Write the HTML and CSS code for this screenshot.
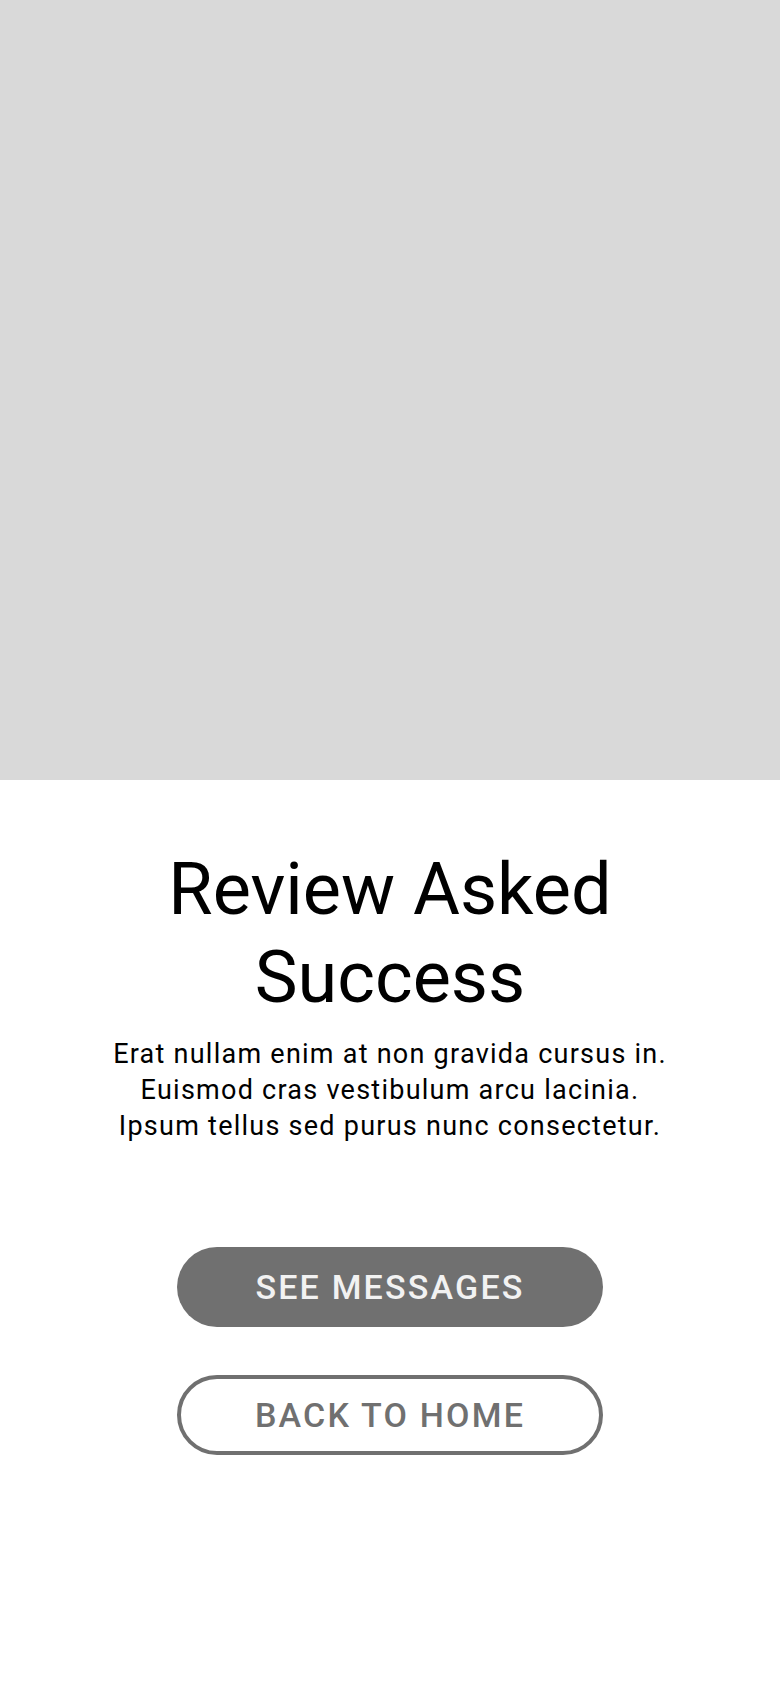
FILE: index.html
```html
<!DOCTYPE html>
<html lang="en">
<head>
<meta charset="utf-8">
<title>Review Asked Success</title>
<link rel="stylesheet" href="styles.css">
</head>
<body>
<div class="screen">
  <div class="hero"></div>
  <main class="content">
    <h1 class="title">Review Asked<br>Success</h1>
    <p class="body">Erat nullam enim at non gravida cursus in.<br>Euismod cras vestibulum arcu lacinia.<br>Ipsum tellus sed purus nunc consectetur.</p>
    <div class="actions">
      <button class="btn btn-primary">SEE MESSAGES</button>
      <button class="btn btn-outline">BACK TO HOME</button>
    </div>
  </main>
</div>
</body>
</html>
```

FILE: styles.css
```css
html, body {
  margin: 0;
  padding: 0;
  background: #ffffff;
}
body {
  font-family: Roboto, "Liberation Sans", sans-serif;
  color: #000;
}
.screen {
  width: 780px;
  min-height: 1688px;
  display: flex;
  flex-direction: column;
}
.hero {
  height: 780px;
  background: #d9d9d9;
}
.content {
  display: flex;
  flex-direction: column;
  align-items: center;
  text-align: center;
  padding-top: 66px;
}
.title {
  margin: 0;
  font-size: 72px;
  font-weight: 400;
  line-height: 88px;
}
.body {
  margin: 14px 0 0;
  font-size: 27px;
  line-height: 36px;
  letter-spacing: 1.25px;
}
.actions {
  margin-top: 103px;
  display: flex;
  flex-direction: column;
  gap: 48px;
}
.btn {
  width: 426px;
  height: 80px;
  border-radius: 40px;
  font-family: Roboto, "Liberation Sans", sans-serif;
  font-size: 34px;
  font-weight: 500;
  letter-spacing: 2.2px;
  box-sizing: border-box;
  cursor: pointer;
}
.btn-primary {
  background: #707070;
  color: #f2f2f2;
  border: none;
}
.btn-outline {
  background: #fff;
  color: #707070;
  border: 4px solid #707070;
}
```
